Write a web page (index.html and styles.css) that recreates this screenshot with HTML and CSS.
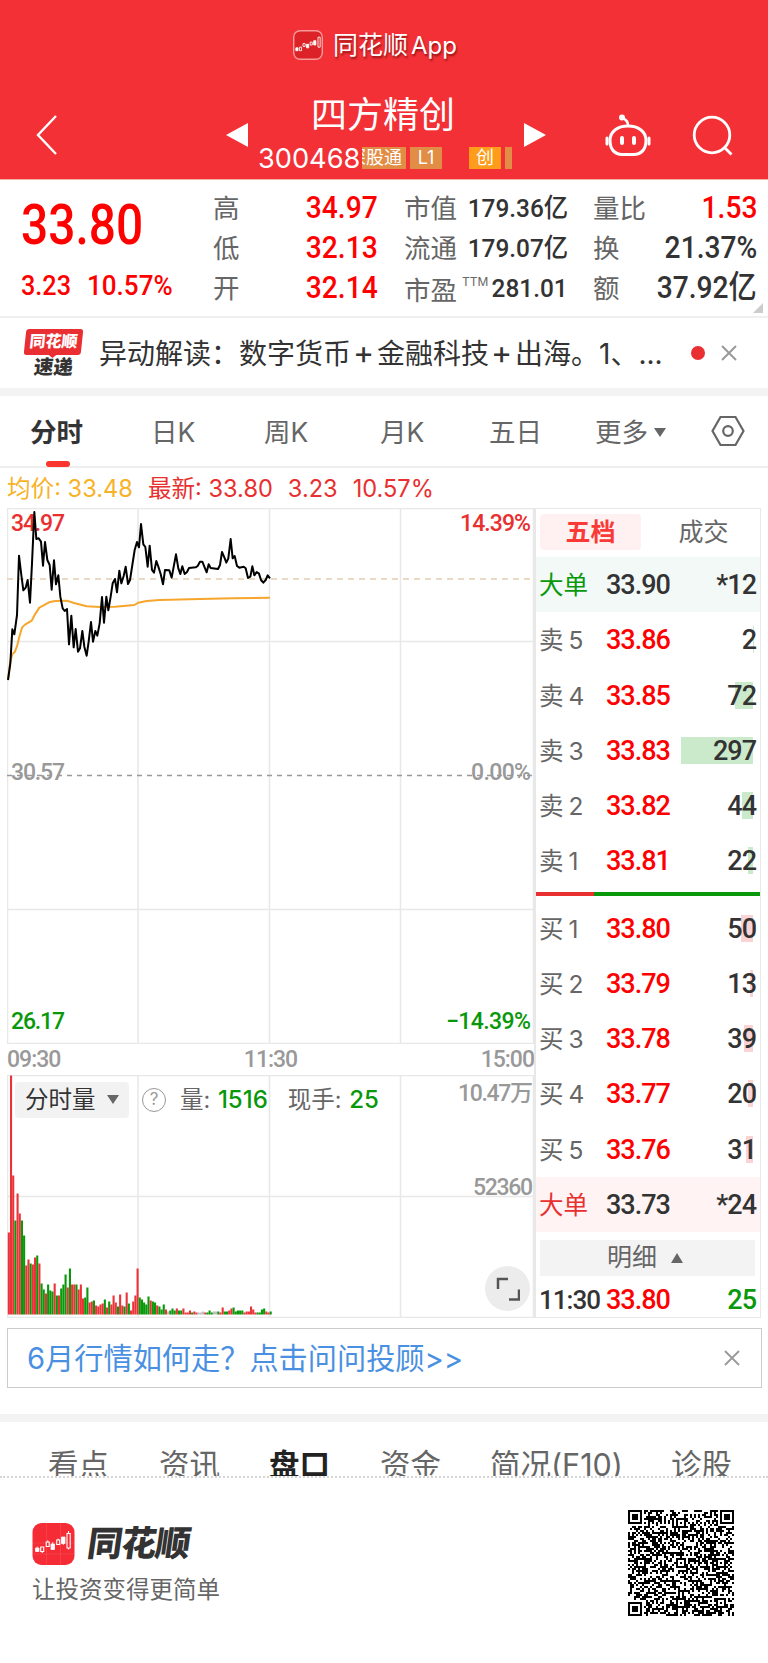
FILE: index.html
```html
<!DOCTYPE html>
<html lang="zh-CN">
<head>
	<meta charset="utf-8">
	<meta name="viewport" content="width=device-width, initial-scale=1">
	<title>四方精创 300468</title>
	<link rel="stylesheet" href="styles.css">
</head>
<body>
	<header class="header">
		<div class="app-name">
			<svg class="app-icon" width="30" height="30" viewBox="0 0 42 42">
				<rect x="1" y="1" width="40" height="40" rx="9" fill="#dc2226" stroke="#f69a9a" stroke-width="2"/>
				<g fill="#fff" stroke="#fff" stroke-width="1.2">
					<path d="M4 25h3v4h-3zM19 20h3v5h-3zM29 15h3v6h-3z"/>
					<path fill="none" d="M9 24h3v5h-3zM14 19h3v4h-3zM24 17h3v4h-3zM35 10h3v14h-3z"/>
				</g>
			</svg>
			<span>同花顺<i>App</i></span>
		</div>
		<div class="nav">
			<svg class="back" width="24" height="42" viewBox="0 0 24 42"><path d="M21 2 3 21l18 19" fill="none" stroke="#fff" stroke-width="2.4"/></svg>
			<svg class="prev" width="22" height="26" viewBox="0 0 22 26"><path d="M22 1v24L0 13z" fill="#fff"/></svg>
			<div class="stock">
				<h1>四方精创</h1>
				<div class="code">
					<span class="num">300468</span>
					<span class="tag tag-cut"><b>深股通</b></span>
					<span class="tag tag-l1">L1</span>
					<span class="tag tag-cy">创</span>
					<span class="tag tag-end"></span>
				</div>
			</div>
			<svg class="next" width="22" height="26" viewBox="0 0 22 26"><path d="M0 1v24l22-12z" fill="#fff"/></svg>
			<svg class="robot" width="48" height="44" viewBox="0 0 48 44" fill="none" stroke="#fff" stroke-width="3" stroke-linecap="round">
				<path d="M24 12c10 0 18 5 18 14.500 0 9-5 14-12 14H18c-7 0-12-5-12-14C6 17 14 12 24 12z"/>
				<path d="M24 11c0-4-2-5-5-7" stroke-width="2.5"/><circle cx="18" cy="3.500" r="1.500"/>
				<path d="M3 24v6M45 24v6" stroke-width="3"/>
				<path d="M18 24v5M30 24v5" stroke-width="4"/>
			</svg>
			<svg class="search" width="42" height="42" viewBox="0 0 42 42" fill="none" stroke="#fff" stroke-width="2.800"><circle cx="20" cy="20" r="17.800"/><path d="m32 32 7.500 7.500"/></svg>
		</div>
	</header>

	<section class="quote">
		<div class="price">
			<div class="din now">33.80</div>
			<div class="change"><span class="din">3.23</span><span class="din">10.57%</span></div>
		</div>
		<dl class="col col-a">
			<dt>高</dt><dd class="din up">34.97</dd>
			<dt>低</dt><dd class="din up">32.13</dd>
			<dt>开</dt><dd class="din up">32.14</dd>
		</dl>
		<dl class="col col-b">
			<dt>市值</dt><dd class="din">179.36亿</dd>
			<dt>流通</dt><dd class="din">179.07亿</dd>
			<dt>市盈<sup>TTM</sup></dt><dd class="din">281.01</dd>
		</dl>
		<dl class="col col-c">
			<dt>量比</dt><dd class="din up">1.53</dd>
			<dt>换</dt><dd class="din">21.37%</dd>
			<dt>额</dt><dd class="din">37.92亿</dd>
		</dl>
		<i class="corner"></i>
	</section>

	<section class="news">
		<div class="badge"><b>同花顺</b><em>速递</em></div>
		<p>异动解读：数字货币<i>+</i>金融科技<i>+</i>出海。<span>1</span>、<span>...</span></p>
		<i class="dot"></i>
		<svg width="16" height="16" viewBox="0 0 16 16"><path d="m1 1 14 14M15 1 1 15" stroke="#999" stroke-width="2"/></svg>
	</section>

	<nav class="tabs">
		<span class="active">分时</span>
		<span>日K</span>
		<span>周K</span>
		<span>月K</span>
		<span>五日</span>
		<span>更多<i class="down"></i></span>
		<svg width="34" height="32" viewBox="0 0 34 32" fill="none" stroke="#666" stroke-width="2.200"><path d="M9.500 2h15L32.500 16l-8 14h-15l-8-14z"/><circle cx="17" cy="16" r="4.800"/></svg>
	</nav>

	<div class="legend">
		<span class="avg">均价: 33.48</span><span>最新: 33.80</span><span>3.23</span><span>10.57%</span>
	</div>

	<main class="board">
		<div class="charts">
			<div class="chart">
				<svg width="527" height="536" viewBox="0 0 527 536">
					<path d="M.5 .5h526v535H.5zM131 0v536M262.500 0v536M393.500 0v536M0 133.500h527M0 401.500h527" fill="none" stroke="#e8e8e8" stroke-width="1.500"/>
					<path d="M0 71h527" stroke="#e3ceb0" stroke-width="1.500" stroke-dasharray="6 5"/>
					<path d="M0 267.500h527" stroke="#999" stroke-width="1.500" stroke-dasharray="5 5"/>
					<text class="t red" x="4" y="23" textLength="54">34.97</text>
					<text class="t red" x="453" y="23" textLength="71">14.39%</text>
					<text class="t gray" x="4" y="272" textLength="54">30.57</text>
					<text class="t gray" x="464" y="272" textLength="60">0.00%</text>
					<text class="t green" x="4" y="521" textLength="54">26.17</text>
					<text class="t green" x="439" y="521" textLength="85">−14.39%</text>
					<g transform="translate(-7 -8) scale(.33333)" fill="none" stroke-linejoin="round">
						<polyline stroke="#f7a62c" stroke-width="6" points="24,540 30,490 37,462 45,455 52,435 58,410 66,383 75,374 95,362 105,343 118,323 135,314 147,307 165,303 200,302 222,309 260,319 300,321 345,320 403,315 415,308 440,303 480,300 600,297 700,295 810,293"/>
						<polyline stroke="#000" stroke-width="6" points="24,540 31,490 37,388 43,403 51,345 57,167 64,225 70,271 77,263 83,240 90,308 96,190 103,36 109,117 116,115 123,125 129,197 135,126 142,180 149,195 155,269 162,181 168,253 175,226 181,290 188,325 194,333 201,327 207,433 214,347 221,442 227,387 234,455 240,445 247,393 253,440 260,467 266,425 273,366 279,425 286,393 292,407 299,370 306,291 312,368 319,290 325,331 332,290 338,250 345,237 351,277 358,212 364,250 371,228 377,200 384,252 390,240 397,195 404,150 411,126 417,142 423,72 430,133 436,141 443,200 449,137 456,210 462,218 469,183 475,200 482,222 489,253 495,210 508,211 515,233 528,163 535,205 541,222 547,199 554,222 561,216 567,204 587,202 593,198 600,185 607,185 613,200 620,217 626,193 632,204 654,207 660,195 666,156 673,172 679,188 685,175 692,117 698,175 704,168 711,198 718,203 731,200 737,205 744,234 751,230 757,199 763,226 770,216 777,221 783,240 790,248 797,240 803,226 810,235"/>
					</g>
				</svg>
			</div>
			<div class="times"><span>09:30</span><span>11:30</span><span>15:00</span></div>
			<div class="volume">
				<svg width="527" height="243" viewBox="0 0 527 243">
					<path d="M.5 .5h526v242H.5zM131 0v243M262.500 0v243M393.500 0v243M0 121.500h527" fill="none" stroke="#e8e8e8" stroke-width="1.500"/>
					<g id="bars"></g>
					<text class="t gray" x="451" y="26" textLength="75">10.47万</text>
					<text class="t gray" x="466" y="120" textLength="60">52360</text>
				</svg>
				<div class="vol-head">
					<span class="pick">分时量<i class="down"></i></span>
					<span class="help">?</span>
					<span class="item">量: <b>1516</b></span>
					<span class="item">现手: <b>25</b></span>
				</div>
				<span class="expand"><svg width="24" height="24" viewBox="0 0 24 24" fill="none" stroke="#555" stroke-width="2.500"><path d="M2 12V2h10M23 12.500v10H13"/></svg></span>
			</div>
		</div>

		<aside class="book">
			<div class="book-tabs"><span class="on">五档</span><span>成交</span></div>
			<div class="row big sell-big"><span>大单</span><b>33.90</b><em>*12</em></div>
			<div class="row"><span>卖<u>5</u></span><b>33.86</b><em>2</em><i class="bar" style="width:.5px"></i></div>
			<div class="row"><span>卖<u>4</u></span><b>33.85</b><em>72</em><i class="bar" style="width:18px"></i></div>
			<div class="row"><span>卖<u>3</u></span><b>33.83</b><em>297</em><i class="bar" style="width:72px"></i></div>
			<div class="row"><span>卖<u>2</u></span><b>33.82</b><em>44</em><i class="bar" style="width:11px"></i></div>
			<div class="row"><span>卖<u>1</u></span><b>33.81</b><em>22</em><i class="bar" style="width:5px"></i></div>
			<div class="ratio"><i style="width:58px"></i></div>
			<div class="row buy"><span>买<u>1</u></span><b>33.80</b><em>50</em><i class="bar" style="width:12px"></i></div>
			<div class="row buy"><span>买<u>2</u></span><b>33.79</b><em>13</em><i class="bar" style="width:3px"></i></div>
			<div class="row buy"><span>买<u>3</u></span><b>33.78</b><em>39</em><i class="bar" style="width:9px"></i></div>
			<div class="row buy"><span>买<u>4</u></span><b>33.77</b><em>20</em><i class="bar" style="width:5px"></i></div>
			<div class="row buy"><span>买<u>5</u></span><b>33.76</b><em>31</em><i class="bar" style="width:7.5px"></i></div>
			<div class="row big buy-big"><span>大单</span><b>33.73</b><em>*24</em></div>
			<div class="detail">明细<i></i></div>
			<div class="row last"><span>11:30</span><b>33.80</b><em>25</em></div>
		</aside>
	</main>

	<div class="ad">
		<span>6月行情如何走？点击问问投顾&gt;&gt;</span>
		<svg width="16" height="16" viewBox="0 0 16 16"><path d="m1 1 14 14M15 1 1 15" stroke="#999" stroke-width="1.800"/></svg>
	</div>

	<nav class="sections">
		<span>看点</span>
		<span>资讯</span>
		<span class="active">盘口</span>
		<span>资金</span>
		<span class="f10">简况(F10)</span>
		<span>诊股</span>
	</nav>

	<footer class="footer">
		<div>
			<div class="brand">
				<svg width="43" height="42" viewBox="0 0 42 42">
					<rect width="42" height="42" rx="9" fill="#f52c35"/>
					<path d="M0 20h42M0 31h42M14 0v42M28 0v42" stroke="#fff" stroke-opacity=".12" stroke-width=".8"/>
					<path d="M3 25h3.500v3.500H3zM18.500 21h3.500v5.500h-3.500zM29 14h3.500v6.500H29zM4.700 23.500v2M20.200 19v3M30.700 20v2" fill="#fff" stroke="#fff" stroke-width=".8"/>
					<path d="M8.200 24h3v4.500h-3zM13.700 19h3v4.500h-3zM24.200 17h3v4.500h-3zM34.500 10.500h3.200V25h-3.200zM9.700 28.500v1.500M15.200 17.500v1.500M25.700 15.800v1.500M36 8v2.500M36 25v1.500" fill="none" stroke="#fff" stroke-width="1.100"/>
				</svg>
				<strong>同花顺</strong>
			</div>
			<p>让投资变得更简单</p>
		</div>
		<svg id="qr" width="106" height="106" viewBox="0 0 53 53" shape-rendering="crispEdges"></svg>
	</footer>
	<script src="script.js"></script>
</body>
</html>
```
FILE: styles.css
```css
* {
	box-sizing: border-box;
}
body {
	margin: 0;
	width: 768px;
	height: 1663px;
	overflow: hidden;
	background: #fff;
	color: #333;
	font-family: Inter, "Noto Sans CJK SC", sans-serif;
}
i, em, u {
	font-style: normal;
	text-decoration: none;
}
svg {
	display: block;
	flex: none;
}
h1, p, dl, dd {
	margin: 0;
}

/* header */
.header {
	height: 180px;
	background: #f23036;
	color: #fff;
	border-bottom: 1px solid #f0b0a8;
}
.app-name {
	display: flex;
	align-items: center;
	height: 90px;
	padding-left: 293px;
	gap: 10px;
	font-size: 25px;
	text-shadow: 1px 2px 2px rgba(90, 0, 0, .6);
}
.app-name span {
	margin-top: -4px;
}
.app-name i {
	margin-left: 3px;
	font-size: 24px;
}
.nav {
	display: flex;
	height: 89px;
}
.back {
	margin: 24px 0 0 35px;
}
.prev {
	margin: 32px 0 0 167px;
}
.stock {
	width: 276px;
	padding-left: 10px;
}
h1 {
	height: 52px;
	padding-left: 53px;
	font-size: 36px;
	font-weight: 400;
	line-height: 51px;
}
.code {
	display: flex;
	height: 32px;
	align-items: center;
}
.num {
	width: 104px;
	font-size: 27.200px;
}
.tag {
	height: 22px;
	margin-right: 4px;
	background: #e28d45;
	font-size: 18px;
	line-height: 21px;
	text-align: center;
}
.tag-cut {
	display: flex;
	width: 44px;
	justify-content: flex-end;
	overflow: hidden;
	padding-right: 4px;
}
.tag-cut b {
	flex: none;
	font-weight: 400;
}
.tag-l1 {
	width: 32px;
}
.tag-cy {
	width: 32px;
	margin-left: 23px;
	background: #ff9c1b;
}
.tag-end {
	width: 7px;
	margin: 0;
}
.next {
	margin: 32px 0 0;
}
.robot {
	margin: 24px 0 0 58px;
}
.search {
	margin: 25px 0 0 40px;
}

/* quote */
.din {
	font-family: Roboto, "Noto Sans CJK SC", sans-serif;
	font-weight: 500;
	white-space: nowrap;
}
.quote {
	position: relative;
	display: flex;
	height: 138px;
	padding-top: 8px;
	border-bottom: 2px solid #f0f0f0;
}
.price {
	width: 213px;
	padding-left: 21px;
	color: #f00;
}
.now {
	height: 74px;
	font-size: 55px;
	line-height: 74px;
	transform: scaleX(.87);
	transform-origin: left;
}
.change {
	display: flex;
	font-size: 28px;
	line-height: 47px;
}
.change span {
	width: 66px;
	transform: scaleX(.9);
	transform-origin: left;
}
.change span + span {
	transform: scaleX(.93);
}
.col {
	display: grid;
	grid-template-columns: 50px minmax(0, 1fr);
	grid-auto-rows: 40px;
	line-height: 40px;
}
.col dt {
	font-size: 26.500px;
	color: #666;
	white-space: nowrap;
}
.col dd {
	justify-self: end;
	font-size: 32px;
	line-height: 39px;
	transform: scaleX(.88);
	transform-origin: right;
}
.col .up {
	color: #f00;
}
.col-a {
	width: 165px;
}
.col-b {
	width: 164px;
	margin-left: 26px;
}
.col-b dd {
	font-size: 26.500px;
	transform: scaleX(.92);
}
.col-b dt:last-of-type {
	padding-top: 2px;
}
.col-c {
	width: 164px;
	margin-left: 25px;
}
sup {
	margin-left: 5px;
	font-size: 12px;
	line-height: 0;
	vertical-align: 14px;
}
.corner {
	position: absolute;
	right: 5px;
	bottom: 3px;
	border: 5px solid #ccc;
	border-top-color: transparent;
	border-left-color: transparent;
}

/* news */
.news {
	display: flex;
	align-items: center;
	height: 78px;
	padding-left: 25px;
	border-bottom: 8px solid #f3f3f3;
}
.badge {
	width: 57px;
	height: 48px;
	font-weight: 900;
	text-align: center;
}
.badge b {
	display: block;
	height: 26px;
	border-radius: 3px;
	background: #ea2f33;
	color: #fff;
	font-size: 16px;
	font-weight: 900;
	line-height: 25px;
	transform: skewX(-6deg);
}
.badge b::after {
	content: "";
	display: block;
	width: 0;
	margin: 0 auto;
	border: 5px solid transparent;
	border-top: 4px solid #ea2f33;
	border-bottom: 0;
}
.badge em {
	display: block;
	padding-top: 2px;
	font-size: 19.500px;
	line-height: 20px;
	transform: skewX(-6deg);
}
.news p {
	width: 609px;
	padding: 0 0 3px 17px;
	font-size: 28px;
	white-space: nowrap;
}
.news p i {
	display: inline-block;
	width: 26px;
	font-size: 32px;
	line-height: 28px;
	text-align: center;
	text-indent: -1px;
}
.dot {
	width: 14px;
	height: 14px;
	margin-right: 16px;
	border-radius: 50%;
	background: #ea2f33;
}

/* period tabs */
.tabs {
	display: grid;
	grid-template-columns: 115px 113px 116px 109px 117px 140px 34px;
	height: 72px;
	border-bottom: 2px solid #eee;
	color: #666;
	font-size: 26.500px;
	line-height: 72px;
}
.tabs span {
	padding-left: 36px;
}
.tabs .active {
	display: flex;
	flex-direction: column;
	padding-left: 30px;
	color: #333;
	font-weight: 700;
}
.tabs .active::after {
	content: "";
	width: 24px;
	height: 6px;
	margin: -7px 0 0 16px;
	border-radius: 3px;
	background: #f9352f;
}
.tabs svg {
	margin-top: 19px;
	margin-left: 1px;
}
.tabs span:nth-child(6) {
	padding-left: 25px;
}
.down {
	display: inline-block;
	margin-left: 6px;
	border: 6.500px solid transparent;
	border-top: 9px solid #666;
	border-bottom: 0;
	vertical-align: 5px;
}
.legend {
	display: flex;
	gap: 15px;
	height: 40px;
	padding-left: 7px;
	color: #e93030;
	font-size: 23.600px;
	line-height: 41px;
}
.avg {
	color: #f7b228;
}

/* charts */
.board {
	display: flex;
	height: 810px;
	padding-left: 7px;
}
.charts {
	width: 527px;
}
.t {
	font: 500 23px Roboto, "Noto Sans CJK SC", sans-serif;
}
.red {
	fill: #e93030;
}
.green {
	fill: #099809;
}
.gray {
	fill: #999;
}
.times {
	display: flex;
	justify-content: space-between;
	height: 31px;
	color: #999;
	font: 500 23px/31px Roboto, sans-serif;
	letter-spacing: -1px;
}
.volume {
	position: relative;
}
.vol-head {
	position: absolute;
	top: 7px;
	left: 8px;
	display: flex;
	align-items: center;
	color: #666;
	font-size: 23.500px;
}
.pick {
	width: 114px;
	height: 36px;
	padding-left: 10px;
	border-radius: 4px;
	background: #f2f2f2;
	color: #333;
	line-height: 36px;
}
.pick .down {
	margin-left: 11px;
	vertical-align: 4px;
}
.help {
	width: 24px;
	height: 24px;
	margin: 0 14px 0 13px;
	border: 1.500px solid #999;
	border-radius: 50%;
	color: #999;
	font-size: 17px;
	line-height: 20px;
	text-align: center;
}
.item {
	margin-right: 20px;
	line-height: 36px;
}
.item b {
	color: #099809;
	margin-left: 1px;
	font-size: 24px;
	font-weight: 500;
}
.expand {
	position: absolute;
	right: 4px;
	bottom: 7px;
	display: grid;
	place-items: center;
	width: 45px;
	height: 45px;
	border-radius: 50%;
	background: #ececec;
}

/* order book */
.book {
	width: 227px;
	border: 1px solid #e8e8e8;
	border-left-width: 2px;
}
.book-tabs {
	display: grid;
	grid-template-columns: 101px 125px;
	height: 48px;
	padding: 5px 0 7px 4px;
	color: #666;
	font-size: 25px;
	line-height: 36px;
	text-align: center;
}
.book-tabs .on {
	border-radius: 4px;
	background: #fff1f2;
	color: #fa3a36;
	font-weight: 700;
}
.row {
	position: relative;
	display: grid;
	grid-template-columns: 67px 70px 1fr;
	height: 55.250px;
	padding: 0 4px 0 3px;
	line-height: 56px;
}
.row span {
	color: #666;
	font-size: 24.500px;
}
.row u {
	margin-left: 5px;
}
.row b, .row em, .last span {
	position: relative;
	z-index: 1;
	font: 500 27px/56px Roboto, sans-serif;
	letter-spacing: -1px;
}
.row b {
	color: #f00;
}
.row em {
	text-align: right;
}
.big b {
	color: #333;
}
.sell-big {
	background: #f2f9f6;
}
.sell-big span {
	color: #099809;
}
.buy-big {
	background: #fff3f3;
}
.buy-big span {
	color: #e93030;
}
.bar {
	position: absolute;
	right: 7px;
	top: 14px;
	height: 27px;
	background: #cbeacb;
}
.buy .bar {
	background: #fad3d5;
}
.ratio {
	height: 4px;
	margin: 3px 0 5px;
	background: #099809;
}
.ratio i {
	display: block;
	height: 4px;
	background: #e93030;
}
.detail {
	height: 36px;
	margin: 8px 5px 0 4px;
	padding-left: 67px;
	background: #f3f3f3;
	color: #666;
	font-size: 25px;
	line-height: 35px;
}
.detail i {
	display: inline-block;
	margin-left: 14px;
	border: 6.500px solid transparent;
	border-top: 0;
	border-bottom: 10px solid #666;
	vertical-align: 3px;
}
.last {
	height: 42px;
}
.row.last span {
	color: #333;
	line-height: 48px;
	font-size: 26px;
}
.row.last b, .row.last em {
	line-height: 48px;
}
.row.last em {
	color: #099809;
}

/* bottom */
.ad {
	display: flex;
	align-items: center;
	justify-content: space-between;
	width: 755px;
	height: 60px;
	margin: 10px 0 26px 7px;
	padding: 0 21px 0 19px;
	border: 1px solid #ccc;
	color: #4a90e2;
	font-size: 29.200px;
}
.ad span {
	padding-bottom: 4px;
}
.sections {
	display: grid;
	grid-template-columns: 111px 111px 110px 110px 181px 1fr;
	height: 64px;
	padding: 2px 0 0 48px;
	overflow: hidden;
	border-top: 8px solid #f3f3f3;
	border-bottom: 2px dotted #d5d5d5;
	color: #666;
	font-size: 30.500px;
	line-height: 81px;
}
.sections .active {
	margin-left: -1px;
	color: #222;
	font-weight: 700;
}
.footer {
	display: flex;
	justify-content: space-between;
	padding: 32px 34px 0 32px;
}
.brand {
	display: flex;
	height: 63px;
	padding-top: 13px;
}
.brand strong {
	margin-left: 12px;
	font-size: 35px;
	font-weight: 900;
	line-height: 40px;
	letter-spacing: -1px;
	transform: skewX(-8deg);
}
.footer p {
	color: #666;
	font-size: 23.500px;
	line-height: 34px;
}
```
FILE: script.js
```js
// one entry per minute: r = up, g = down, w = flat, then the bar height
var vol = 'r82 r239 r139 g94 r121 r101 g94 g79 r49 r55 g51 r50 r57 g59 r51 g31 g25 r21 g30 g24 g23 r31 g19 r19 g26 g30 g40 r27 g46 r30 r30 g30 r25 r30 r16 g17 g27 r12 r13 g14 r9 r8 r10 r11 g15 r7 g13 r10 r19 r12 g8 r20 r9 g8 r22 g11 r4 r13 r19 r46 g17 g15 g12 g10 g18 r14 g13 g12 r9 g8 g5 g10 r5 w3 g4 g6 g4 r6 g4 g4 r6 r2 r2 r4 g2 r3 r2 w2 w2 w3 r2 g2 g4 g2 w3 w3 g3 r2 r7 g3 g3 r4 r6 g7 g3 g4 g4 g4 r2 r3 r3 r8 r5 r2 g2 g2 g5 g6 r3 r2 g3'.split(' ');
var colors = { r: '#ea3338', g: '#099809', w: '#bbb' };
var out = '';
for (var i = 0; i < vol.length; i++) {
	var h = Number(vol[i].slice(1));
	out += '<rect x="' + (0.8 + i * 2.182) + '" y="' + (239.5 - h) + '" width="2.1" height="' + h + '" fill="' + colors[vol[i][0]] + '"/>';
}
document.getElementById('bars').innerHTML = out;

// 53 x 53 code grid
var n = 53, seed = 300468, d = '';
var spots = [[6, 26], [26, 6], [26, 26], [26, 46], [46, 26], [46, 46]];
function cell(x, y) {
	var corners = [[3, 3], [n - 4, 3], [3, n - 4]];
	for (var k = 0; k < 3; k++) {
		var r = Math.max(Math.abs(x - corners[k][0]), Math.abs(y - corners[k][1]));
		if (r <= 4) return r < 2 || r == 3;
	}
	for (var j = 0; j < spots.length; j++) {
		var q = Math.max(Math.abs(x - spots[j][0]), Math.abs(y - spots[j][1]));
		if (q <= 2) return q != 1;
	}
	if (x == 6 || y == 6) return (x + y) % 2 == 0;
	seed = (seed * 48271) % 2147483647;
	return seed / 2147483647 > 0.49;
}
for (var y = 0; y < n; y++) {
	for (var x = 0; x < n; x++) {
		if (cell(x, y)) d += 'M' + x + ' ' + y + 'h1v1h-1z';
	}
}
document.getElementById('qr').innerHTML = '<path d="' + d + '"/>';
```
